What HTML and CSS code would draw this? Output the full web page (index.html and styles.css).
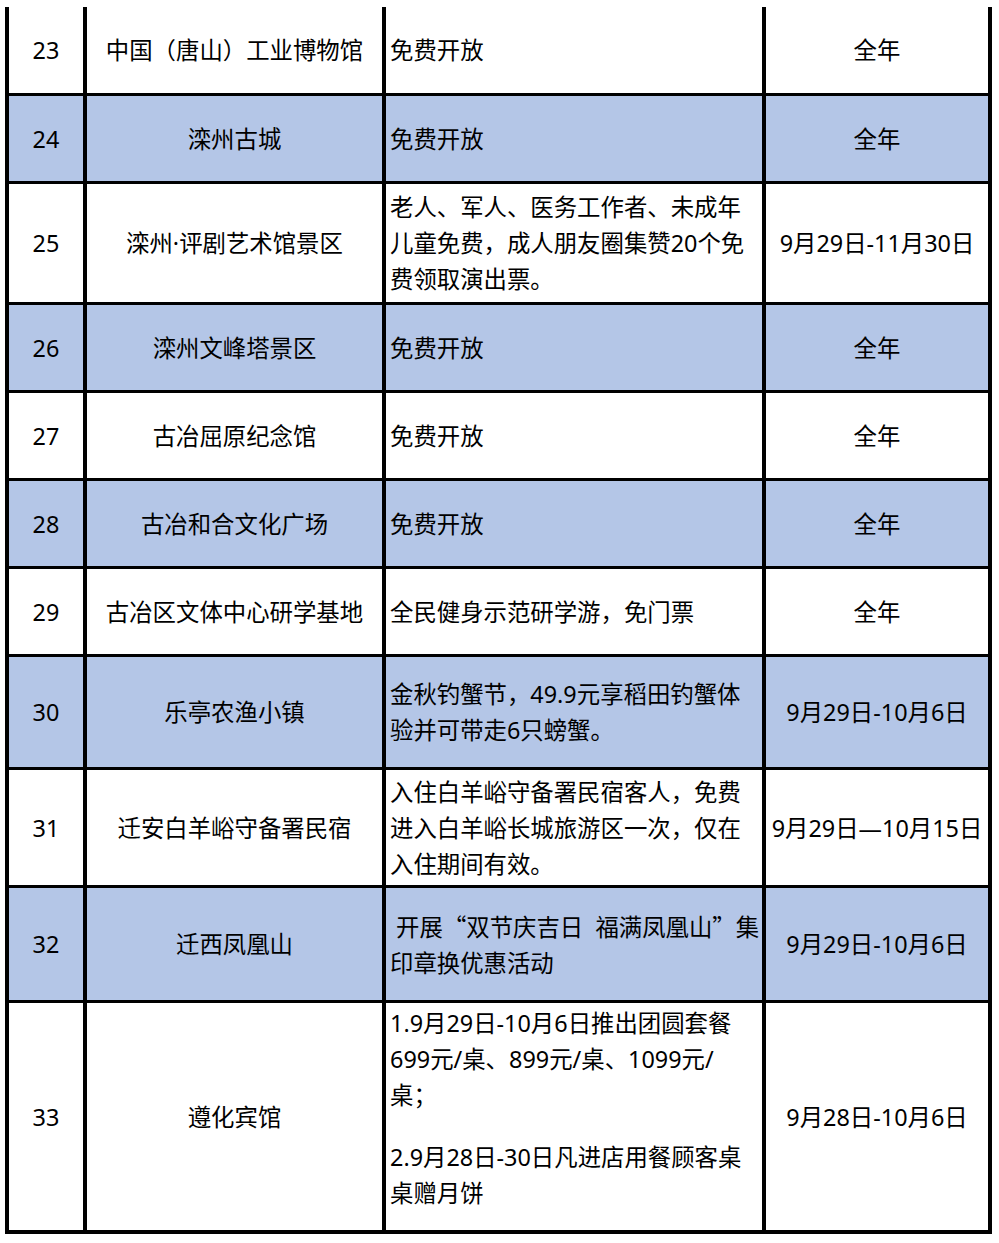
FILE: index.html
```html
<!DOCTYPE html>
<html lang="zh-CN">
<head>
<meta charset="utf-8">
<title>景区优惠</title>
<link rel="stylesheet" href="styles.css">
</head>
<body>
<div class="sheet">
  <div class="c num r23">23</div>
  <div class="c name r23">中国（唐山）工业博物馆</div>
  <div class="c desc r23"><div class="t">免费开放</div></div>
  <div class="c date r23">全年</div>

  <div class="c num blue">24</div>
  <div class="c name blue">滦州古城</div>
  <div class="c desc blue"><div class="t">免费开放</div></div>
  <div class="c date blue">全年</div>

  <div class="c num">25</div>
  <div class="c name">滦州·评剧艺术馆景区</div>
  <div class="c desc"><div class="t">老人、军人、医务工作者、未成年<br>儿童免费，成人朋友圈集赞20个免<br>费领取演出票。</div></div>
  <div class="c date">9月29日-11月30日</div>

  <div class="c num blue">26</div>
  <div class="c name blue">滦州文峰塔景区</div>
  <div class="c desc blue"><div class="t">免费开放</div></div>
  <div class="c date blue">全年</div>

  <div class="c num">27</div>
  <div class="c name">古冶屈原纪念馆</div>
  <div class="c desc"><div class="t">免费开放</div></div>
  <div class="c date">全年</div>

  <div class="c num blue">28</div>
  <div class="c name blue">古冶和合文化广场</div>
  <div class="c desc blue"><div class="t">免费开放</div></div>
  <div class="c date blue">全年</div>

  <div class="c num">29</div>
  <div class="c name">古冶区文体中心研学基地</div>
  <div class="c desc"><div class="t">全民健身示范研学游，免门票</div></div>
  <div class="c date">全年</div>

  <div class="c num blue">30</div>
  <div class="c name blue">乐亭农渔小镇</div>
  <div class="c desc blue"><div class="t">金秋钓蟹节，49.9元享稻田钓蟹体<br>验并可带走6只螃蟹。</div></div>
  <div class="c date blue">9月29日-10月6日</div>

  <div class="c num">31</div>
  <div class="c name">迁安白羊峪守备署民宿</div>
  <div class="c desc"><div class="t">入住白羊峪守备署民宿客人，免费<br>进入白羊峪长城旅游区一次，仅在<br>入住期间有效。</div></div>
  <div class="c date">9月29日—10月15日</div>

  <div class="c num blue">32</div>
  <div class="c name blue">迁西凤凰山</div>
  <div class="c desc blue"><div class="t">&nbsp;开展<span class="q">“</span>双节庆吉日&nbsp; 福满凤凰山<span class="q">”</span>集<br>印章换优惠活动</div></div>
  <div class="c date blue">9月29日-10月6日</div>

  <div class="c num last">33</div>
  <div class="c name last">遵化宾馆</div>
  <div class="c desc last top">
    <div class="t">1.9月29日-10月6日推出团圆套餐<br>699元/桌、899元/桌、1099元/<br>桌；</div>
    <div class="t gap">2.9月28日-30日凡进店用餐顾客桌<br>桌赠月饼</div>
  </div>
  <div class="c date last">9月28日-10月6日</div>
</div>
</body>
</html>
```

FILE: styles.css
```css
html, body {
  margin: 0;
  padding: 0;
  background: #ffffff;
}

body {
  font-family: "Noto Sans", "Noto Sans CJK SC", sans-serif;
  font-size: 23.4px;
  line-height: 36px;
  color: #000000;
}

.sheet {
  display: grid;
  grid-template-columns: 82px 299px 380px 226px;
  grid-template-rows: 89px 88px 121px 88px 88px 88px 88px 113px 118px 115px 231px;
  margin: 7px 0 0 5px;
  width: 987px;
}

.c {
  box-sizing: border-box;
  border-right: 4px solid #000;
  border-bottom: 3px solid #000;
  display: flex;
  align-items: center;
  white-space: nowrap;
  background: #ffffff;
}

.blue {
  background: #b4c6e7;
}

.num {
  border-left: 4px solid #000;
  justify-content: center;
}

.name,
.date {
  justify-content: center;
}

.desc {
  padding-left: 4px;
}

.last {
  border-bottom-width: 4px;
}

.top {
  flex-direction: column;
  align-items: flex-start;
  justify-content: flex-start;
  padding-top: 2px;
}

.gap {
  margin-top: 26px;
}

.q {
  font-family: "Noto Sans CJK SC", sans-serif;
}
```
